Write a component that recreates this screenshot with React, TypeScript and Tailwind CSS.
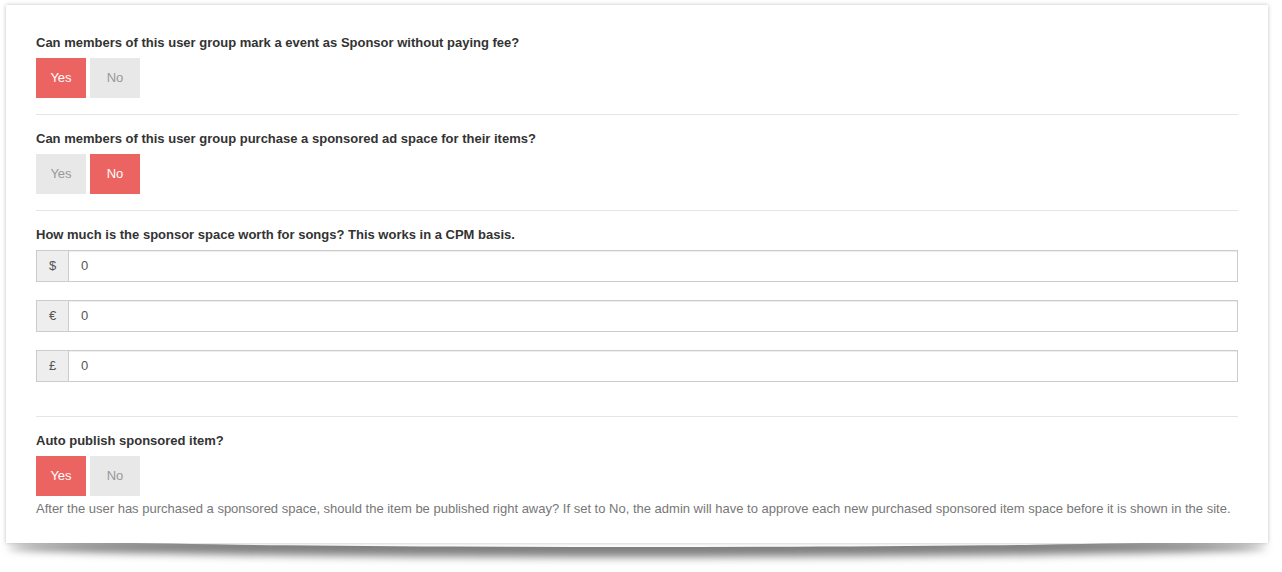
import { useState } from 'react';

type Toggle = { label: string; value: boolean };

const YesNo = ({ value, onChange }: { value: boolean; onChange: (v: boolean) => void }) => {
  const on = 'bg-[#ec6461] text-white';
  const off = 'bg-[#e8e8e8] text-[#999]';
  return (
    <div className="flex gap-[4px]">
      <button
        onClick={() => onChange(true)}
        className={`w-[50px] h-[40px] text-[13px] ${value ? on : off}`}
      >
        Yes
      </button>
      <button
        onClick={() => onChange(false)}
        className={`w-[50px] h-[40px] text-[13px] ${!value ? on : off}`}
      >
        No
      </button>
    </div>
  );
};

const Label = ({ children }: { children: React.ReactNode }) => (
  <div className="text-[13px] leading-[18px] font-bold text-[#333] mb-[6px]">{children}</div>
);

const App = () => {
  const [toggles, setToggles] = useState<Toggle[]>([
    { label: 'Can members of this user group mark a event as Sponsor without paying fee?', value: true },
    { label: 'Can members of this user group purchase a sponsored ad space for their items?', value: false },
  ]);
  const [autoPublish, setAutoPublish] = useState(true);
  const [prices, setPrices] = useState([
    { sym: '$', val: '0' },
    { sym: '€', val: '0' },
    { sym: '£', val: '0' },
  ]);

  return (
    <div className="min-h-[572px] bg-white pt-[5px] px-[6px] font-['Liberation_Sans',Arial,sans-serif]">
      <div className="relative w-[1262px]">
        {/* lifted shadow under the card */}
        <div className="absolute left-[2px] right-[2px] bottom-[-4px] h-[20px] rounded-[50%] shadow-[0_10px_8px_rgba(0,0,0,0.5)]" />
        <div className="relative bg-white shadow-[0_0_4px_rgba(0,0,0,0.25)] px-[30px] pt-[29px] pb-[25px]">
          {toggles.map((t, i) => (
            <div key={i}>
              <Label>{t.label}</Label>
              <YesNo
                value={t.value}
                onChange={(v) =>
                  setToggles(toggles.map((x, j) => (j === i ? { ...x, value: v } : x)))
                }
              />
              <hr className="border-t border-[#e5e5e5] mt-[16px] mb-[15px]" />
            </div>
          ))}

          <Label>How much is the sponsor space worth for songs? This works in a CPM basis.</Label>
          <div className="flex flex-col gap-[18px]">
            {prices.map((p, i) => (
              <div key={i} className="flex h-[32px]">
                <span className="w-[33px] flex items-center justify-center bg-[#eee] border border-[#ccc] text-[13px] text-[#555]">
                  {p.sym}
                </span>
                <input
                  value={p.val}
                  onChange={(e) =>
                    setPrices(prices.map((x, j) => (j === i ? { ...x, val: e.target.value } : x)))
                  }
                  className="flex-1 border border-l-0 border-[#ccc] px-[12px] text-[13px] text-[#555] outline-none shadow-[inset_0_1px_1px_rgba(0,0,0,0.075)]"
                />
              </div>
            ))}
          </div>
          <hr className="border-t border-[#e5e5e5] mt-[34px] mb-[15px]" />

          <Label>Auto publish sponsored item?</Label>
          <YesNo value={autoPublish} onChange={setAutoPublish} />
          <p className="text-[13px] leading-[18px] text-[#777] mt-[4px]">
            After the user has purchased a sponsored space, should the item be published right away? If set to No, the admin will have to approve each new purchased sponsored item space before it is shown in the site.
          </p>
        </div>
      </div>
    </div>
  );
};

export default App;
